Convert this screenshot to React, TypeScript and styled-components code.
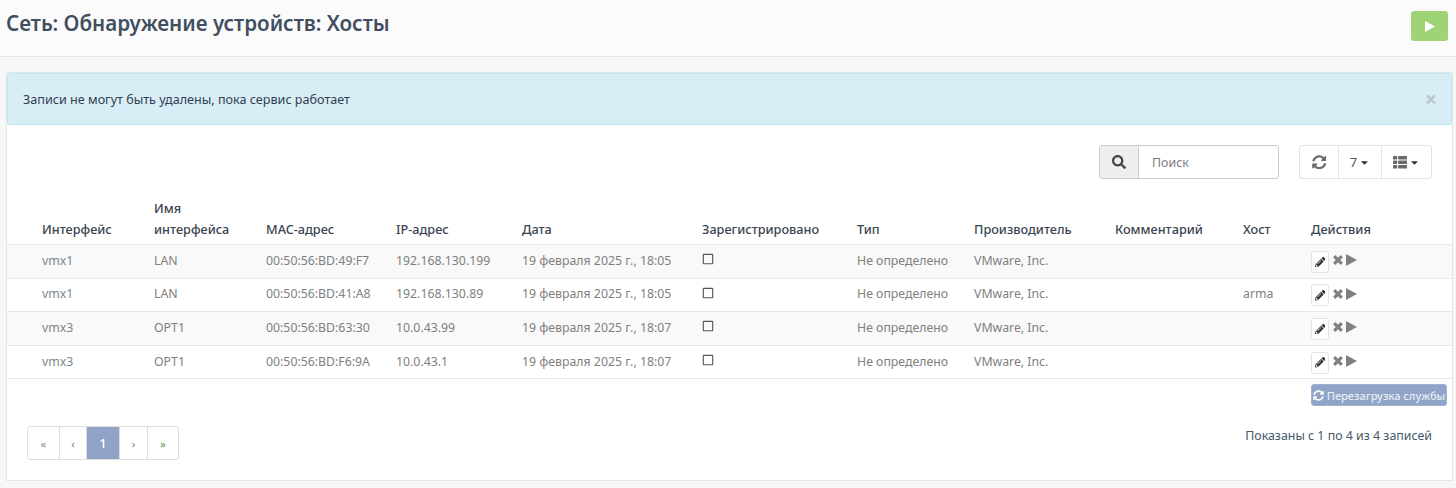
import React from "react";
import styled, { createGlobalStyle } from "styled-components";
import { FaSearch, FaSyncAlt, FaThList, FaPencilAlt, FaCaretDown, FaRegSquare } from "react-icons/fa";

const Global = createGlobalStyle`
  html, body { margin: 0; padding: 0; background: #f7f7f7; }
  body { font-family: "Noto Sans", "Open Sans", sans-serif; font-size: 13px; color: #3f4d5c; }
`;

const Page = styled.div`
  width: 1456px;
  height: 488px;
  overflow: hidden;
`;
const Header = styled.header`
  height: 45px;
  background: #fbfbfb;
  border-bottom: 1px solid #e5e5e5;
  display: flex;
  justify-content: space-between;
  align-items: flex-start;
  padding: 11px 8px 0 6px;
  margin-bottom: 15px;
`;
const Title = styled.h1`
  margin: -1px 0 0;
  font-size: 20.6px;
  line-height: 26px;
  font-weight: 600;
  color: #414f60;
`;
const StartButton = styled.button`
  width: 37px;
  height: 30px;
  border: 0;
  border-radius: 3px;
  background: #9fd475;
  color: #fff;
  display: flex;
  align-items: center;
  justify-content: center;
  padding: 0;
`;
const PlayShape = styled.svg<{ $w: number; $h: number }>`
  width: ${(p) => p.$w}px;
  height: ${(p) => p.$h}px;
  fill: currentColor;
  display: block;
  flex: none;
`;
const Card = styled.section`
  margin: 0 3px 0 6px;
  height: 407px;
  background: #fff;
  border: 1px solid #e5e5e5;
`;
const Alert = styled.div`
  height: 52px;
  background: #d9edf7;
  border: 1px solid #bce8f1;
  border-radius: 3px;
  padding: 0 14px 0 15px;
  display: flex;
  align-items: center;
  justify-content: space-between;
  font-size: 12.6px;
  color: #31404f;
  box-sizing: border-box;
`;
const Close = styled.span`
  color: #b9c6cd;
  font-size: 21px;
  font-weight: 700;
  line-height: 1;
`;
const Toolbar = styled.div`
  display: flex;
  justify-content: flex-end;
  gap: 20px;
  padding: 20px 20px 0 0;
  height: 34px;
`;
const SearchGroup = styled.div`
  display: flex;
  width: 180px;
  height: 34px;
  border: 1px solid #ccc;
  border-radius: 3px;
  box-sizing: border-box;
`;
const SearchAddon = styled.span`
  width: 38px;
  background: #eee;
  border-right: 1px solid #ccc;
  display: flex;
  align-items: center;
  justify-content: center;
  color: #444;
  font-size: 14px;
`;
const SearchPlaceholder = styled.span`
  flex: 1;
  padding-left: 13px;
  line-height: 33px;
  font-size: 12.4px;
  color: #7d7d7d;
`;
const BtnGroup = styled.div`
  display: flex;
  height: 34px;
  border: 1px solid #e3e3e3;
  border-radius: 3px;
  box-sizing: border-box;
`;
const ToolButton = styled.span<{ $w: number }>`
  width: ${(p) => p.$w}px;
  display: flex;
  align-items: center;
  justify-content: center;
  gap: 2px;
  color: #6a6a6a;
  font-size: 14.5px;
  box-sizing: border-box;
  & + & { border-left: 1px solid #e3e3e3; }
`;
const CountLabel = styled.span`
  font-size: 13px;
  color: #555;
`;
const Caret = styled(FaCaretDown)`
  font-size: 11px;
  color: #333;
`;
const Table = styled.table`
  width: 100%;
  table-layout: fixed;
  border-collapse: collapse;
  margin-top: 19px;
  font-size: 12.3px;
`;
const Col = styled.col<{ $w: number }>`
  width: ${(p) => p.$w}px;
`;
const Th = styled.th`
  text-align: left;
  vertical-align: bottom;
  font-weight: 500;
  font-size: 12.7px;
  color: #3a4450;
  padding: 0 16px 4px 0;
  line-height: 21px;
  box-sizing: border-box;
  border-bottom: 1px solid #e7e7e7;
  &:first-child { padding-left: 35px; }
  &:nth-child(6) { padding-right: 0; }
`;
const Tr = styled.tr`
  &:nth-child(odd) { background: #f9f9f9; }
`;
const Td = styled.td`
  height: 33.6px;
  padding: 0 0 2px;
  box-sizing: border-box;
  border-bottom: 1px solid #e7e7e7;
  color: #808080;
  vertical-align: middle;
  &:first-child { padding-left: 35px; }
`;
const IfaceLink = styled.span`
  color: #7a8790;
`;
const Check = styled(FaRegSquare)`
  font-size: 12px;
  color: #555;
  display: block;
  margin-top: -2px;
`;
const Actions = styled.div`
  display: flex;
  align-items: flex-start;
  color: #808080;
  margin-top: 2px;
`;
const EditButton = styled.span`
  width: 18px;
  height: 22px;
  border: 1px solid #e3e3e3;
  border-radius: 3px;
  background: #fff;
  box-sizing: border-box;
  display: flex;
  align-items: center;
  justify-content: center;
  font-size: 10.5px;
  color: #333;
  margin-top: 1px;
`;
const RemoveShape = styled.svg`
  width: 10px;
  height: 10px;
  margin: 5.5px 0 0 3.5px;
  fill: none;
  stroke: currentColor;
  stroke-width: 3.2;
  display: block;
  flex: none;
`;
const ActionPlay = styled.span`
  margin: 4.5px 0 0 3.5px;
`;
const RestartRow = styled.div`
  display: flex;
  justify-content: flex-end;
  padding: 5px 5px 0 0;
`;
const RestartButton = styled.span`
  width: 136px;
  height: 22px;
  background: #8fa4c6;
  border: 1px solid #9fb2cf;
  border-radius: 3px;
  box-sizing: border-box;
  color: #e8edf5;
  font-size: 11px;
  font-weight: 500;
  display: flex;
  align-items: center;
  justify-content: center;
  gap: 3px;
  white-space: nowrap;
  & > svg { color: #fff; }
`;
const Footer = styled.div`
  display: flex;
  justify-content: space-between;
  align-items: flex-start;
  padding: 20px 20px 0 20px;
`;
const Pager = styled.div`
  display: flex;
  height: 34px;
  border: 1px solid #ddd;
  border-radius: 3px;
  box-sizing: border-box;
`;
const PageItem = styled.span<{ $w: number; $active?: boolean; $color?: string }>`
  width: ${(p) => p.$w}px;
  display: flex;
  align-items: center;
  justify-content: center;
  box-sizing: border-box;
  font-size: ${(p) => (p.$active ? "13px" : "11.5px")};
  font-weight: ${(p) => (p.$active ? 500 : 400)};
  background: ${(p) => (p.$active ? "#8fa4c6" : "transparent")};
  color: ${(p) => (p.$active ? "#fff" : p.$color || "#777")};
  & + & { border-left: ${(p) => (p.$active ? "0" : "1px solid #ddd")}; }
`;
const Info = styled.span`
  line-height: 20px;
  font-size: 12.4px;
  color: #46586b;
`;

const cols = [147, 112, 130, 126, 180, 155, 117, 141, 128, 68, 141];
const heads = ["Интерфейс", "Имя интерфейса", "MAC-адрес", "IP-адрес", "Дата", "Зарегистрировано", "Тип", "Производитель", "Комментарий", "Хост", "Действия"];
const rows = [
  ["vmx1", "LAN", "00:50:56:BD:49:F7", "192.168.130.199", "19 февраля 2025 г., 18:05", ""],
  ["vmx1", "LAN", "00:50:56:BD:41:A8", "192.168.130.89", "19 февраля 2025 г., 18:05", "arma"],
  ["vmx3", "OPT1", "00:50:56:BD:63:30", "10.0.43.99", "19 февраля 2025 г., 18:07", ""],
  ["vmx3", "OPT1", "00:50:56:BD:F6:9A", "10.0.43.1", "19 февраля 2025 г., 18:07", ""],
];

function Play({ w, h }: { w: number; h: number }) {
  return (
    <PlayShape $w={w} $h={h} viewBox="0 0 10 10" preserveAspectRatio="none">
      <polygon points="0,0 10,5 0,10" />
    </PlayShape>
  );
}

export default function App() {
  return (
    <Page>
      <Global />
      <Header>
        <Title>Сеть: Обнаружение устройств: Хосты</Title>
        <StartButton><Play w={10} h={11} /></StartButton>
      </Header>
      <Card>
        <Alert>
          <span>Записи не могут быть удалены, пока сервис работает</span>
          <Close>×</Close>
        </Alert>
        <Toolbar>
          <SearchGroup>
            <SearchAddon><FaSearch /></SearchAddon>
            <SearchPlaceholder>Поиск</SearchPlaceholder>
          </SearchGroup>
          <BtnGroup>
            <ToolButton $w={38}><FaSyncAlt /></ToolButton>
            <ToolButton $w={43}><CountLabel>7</CountLabel><Caret /></ToolButton>
            <ToolButton $w={50}><FaThList /><Caret /></ToolButton>
          </BtnGroup>
        </Toolbar>
        <Table>
          <colgroup>
            {cols.map((w, i) => <Col key={i} $w={w} />)}
          </colgroup>
          <thead>
            <tr>{heads.map((h) => <Th key={h}>{h}</Th>)}</tr>
          </thead>
          <tbody>
            {rows.map((r) => (
              <Tr key={r[2]}>
                <Td><IfaceLink>{r[0]}</IfaceLink></Td>
                <Td>{r[1]}</Td>
                <Td>{r[2]}</Td>
                <Td>{r[3]}</Td>
                <Td>{r[4]}</Td>
                <Td><Check /></Td>
                <Td>Не определено</Td>
                <Td>VMware, Inc.</Td>
                <Td></Td>
                <Td>{r[5]}</Td>
                <Td>
                  <Actions>
                    <EditButton><FaPencilAlt /></EditButton>
                    <RemoveShape viewBox="0 0 10 10"><path d="M1.2 1.2 L8.8 8.8 M8.8 1.2 L1.2 8.8" /></RemoveShape>
                    <ActionPlay><Play w={11} h={12} /></ActionPlay>
                  </Actions>
                </Td>
              </Tr>
            ))}
          </tbody>
        </Table>
        <RestartRow>
          <RestartButton><FaSyncAlt />Перезагрузка службы</RestartButton>
        </RestartRow>
        <Footer>
          <Pager>
            <PageItem $w={31} $color="#a08a80">«</PageItem>
            <PageItem $w={27} $color="#8a7a70">‹</PageItem>
            <PageItem $w={33} $active>1</PageItem>
            <PageItem $w={28} $color="#a07a70">›</PageItem>
            <PageItem $w={31} $color="#5f9a60">»</PageItem>
          </Pager>
          <Info>Показаны с 1 по 4 из 4 записей</Info>
        </Footer>
      </Card>
    </Page>
  );
}
